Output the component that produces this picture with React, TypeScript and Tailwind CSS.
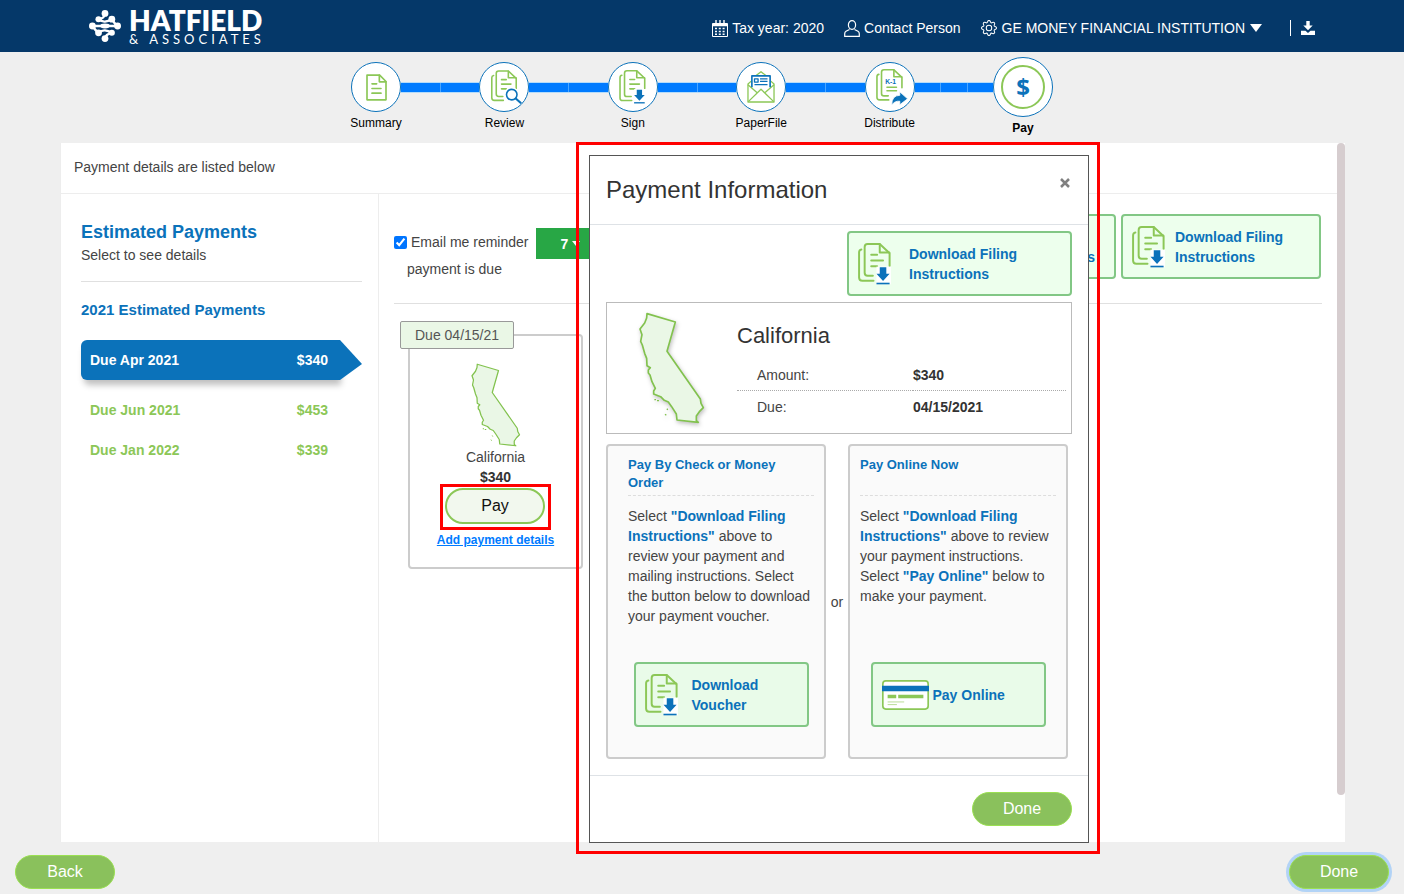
import type { ReactNode } from "react";
import clsx from "clsx";
import { BsGear } from "react-icons/bs";

const STEPS = [
    { label: "Summary", icon: <SummaryIcon /> },
    { label: "Review", icon: <ReviewIcon /> },
    { label: "Sign", icon: <DownloadDocIcon className="h-[34px] w-[27px]" /> },
    { label: "PaperFile", icon: <EnvelopeIcon /> },
    { label: "Distribute", icon: <DistributeIcon /> },
];

const PAYMENTS = [
    { due: "Due Apr 2021", amount: "$340", active: true },
    { due: "Due Jun 2021", amount: "$453", active: false },
    { due: "Due Jan 2022", amount: "$339", active: false },
];

function LogoMark() {
    return (
        <svg viewBox="0 0 94 94" className="h-8 w-8" fill="#fff">
            <circle cx="47" cy="10" r="10" />
            <circle cx="28" cy="27" r="9" />
            <circle cx="67" cy="27" r="10" />
            <circle cx="10" cy="47" r="10" />
            <ellipse cx="47" cy="47" rx="14" ry="7" />
            <circle cx="84" cy="47" r="10" />
            <circle cx="28" cy="67" r="10" />
            <circle cx="67" cy="67" r="9" />
            <circle cx="47" cy="84" r="10" />
            <g stroke="#fff" strokeWidth="7" fill="none">
                <path d="M47 12q-2 12-18 15M28 27q10 8 19 7t20-7q8 14 17 20M10 47h74M10 47q8 12 18 20 10-8 19-7t20 7M67 67q-18 4-20 16" />
            </g>
        </svg>
    );
}

function CalendarIcon() {
    return (
        <svg viewBox="0 0 16 17" className="h-[17px] w-4" fill="none" stroke="#fff">
            <path d="M.5 3.5h15v13H.5z" />
            <path d="M.5 4.5h15M.5 5.5h15M4 0v5M8 0v5M12 0v5" strokeWidth="1.4" />
            <path d="M3 8.5h10M3 11.5h10M3 14.2h10" strokeWidth="1.6" strokeDasharray="2 1.8" />
        </svg>
    );
}

function PersonIcon() {
    return (
        <svg viewBox="0 0 16 17" className="h-[17px] w-4" fill="none" stroke="#fff" strokeWidth="1.2">
            <ellipse cx="8" cy="5" rx="3.6" ry="4.3" />
            <path d="M5.5 9.5 2 11.3q-1.3.8-1.3 2.5v2.500h14.600v-2.500q0-1.700-1.300-2.500l-3.500-1.800" />
        </svg>
    );
}

function TrayIcon() {
    return (
        <svg viewBox="0 0 14 14" className="h-3.5 w-3.5" fill="#fff">
            <path d="M5.3 0h3.4v4.5h3L7 9.3 2.3 4.5h3z" />
            <path d="M0 9.8h4.5L7 12l2.5-2.2H14V14H0z" />
        </svg>
    );
}

// Two stacked sheets, shared by most of the step and button icons
function Sheets({ children }: { children?: ReactNode }) {
    return (
        <>
            <g fill="none" stroke="#8cc757" strokeWidth="6" strokeLinecap="round">
                <path d="M10 20q-7 1-7 9v76q0 10 10 10h34" />
                <path d="M96 70V31L66 3H29q-9 0-9 9v79q0 9 9 9h16" />
                <path d="M66 4v25h29" strokeLinejoin="round" />
            </g>
            {children}
        </>
    );
}

function SheetLines() {
    return <path d="M40 36h18M40 53h36M40 71h18" stroke="#8cc757" strokeWidth="6" strokeLinecap="round" />;
}

function DownloadDocIcon({ className }: { className?: string }) {
    return (
        <svg viewBox="0 0 100 128" className={clsx("shrink-0", className)}>
            <Sheets>
                <SheetLines />
                <path d="M56 72h44v54H56z" fill="#fff" />
                <path d="M66 74h20v20h10L76 116 56 94h10z" fill="#0b72ba" />
                <path d="M56 121h40v5H56z" fill="#0b72ba" />
            </Sheets>
        </svg>
    );
}

function SummaryIcon() {
    return (
        <svg viewBox="0 0 63 80" className="h-[27px] w-[21px]" fill="none" stroke="#8cc757" strokeWidth="5" strokeLinejoin="round">
            <path d="M3 3h38l19 19v55H3z" />
            <path d="M40 3v20h20M18 29h14M18 43h27M18 57h27" strokeLinecap="round" />
        </svg>
    );
}

function ReviewIcon() {
    return (
        <svg viewBox="0 0 118 128" className="ml-1 h-[34px] w-[31px]">
            <Sheets>
                <SheetLines />
                <circle cx="79" cy="93" r="28" fill="#fff" />
                <circle cx="79" cy="93" r="20" fill="#fff" stroke="#0b72ba" strokeWidth="6" />
                <path d="m93 107 22 19" stroke="#0b72ba" strokeWidth="8" />
            </Sheets>
        </svg>
    );
}

function DistributeIcon() {
    return (
        <svg viewBox="0 0 118 134" className="ml-1 h-9 w-8">
            <Sheets>
                <text x="34" y="57" fontSize="25" fontWeight="700" fill="#0b72ba" fontFamily="Liberation Sans, Arial, sans-serif">
                    K-1
                </text>
                <path d="M40 68h36M40 81h36" stroke="#8cc757" strokeWidth="5" strokeLinecap="round" />
                <path d="M58 134q0-36 30-36V85l29 26-29 22v-13q-19-2-30 14z" fill="#0b72ba" stroke="#fff" strokeWidth="3" />
            </Sheets>
        </svg>
    );
}

function EnvelopeIcon() {
    return (
        <svg viewBox="0 0 86 98" className="h-8 w-7" fill="none" stroke="#8cc757" strokeWidth="4" strokeLinejoin="round">
            <path d="M28 14 43 2l15 12M13 31 3 40v55h80V40l-10-9" />
            <path d="m3 42 30 26M83 42 53 68M4 94l39-38 39 38" />
            <path d="M15 50V15h56v35" stroke="#0b72ba" strokeWidth="5" />
            <path d="M23 24h11v10H23zM40 24h23M40 32h23M23 42h40" stroke="#0b72ba" strokeWidth="4" />
        </svg>
    );
}

function CardIcon() {
    return (
        <svg viewBox="0 0 142 90" className="h-[30px] w-[47px] shrink-0">
            <rect x="2.5" y="2.5" width="137" height="85" rx="9" fill="#fff" stroke="#8cc757" strokeWidth="5" />
            <path d="M0 17h142v17H0z" fill="#0b72ba" />
            <path d="M17 44h26v11H17zM49 44h76v11H49z" fill="#8cc757" />
            <path d="M17 66h50M17 74h28" stroke="#b9dd97" strokeWidth="3" />
        </svg>
    );
}

function California({ className }: { className?: string }) {
    return (
        <svg viewBox="148 66 198 336" className={className}>
            <path
                d="m172 71 85 25-25 88 100 143 2 13 7 13-12 12-9 13v14l6 5-64-7-2-18-14-22-10-14-12-5-11-11-21-8v-9l5-8-10-20-6-20-5-6v-9l6-7-10-6-1-22-6-15-7-25-5-11 4-20-6-17 14-18 6-15z"
                fill="#eaf7e6"
                stroke="#82c24e"
                strokeWidth="5"
                strokeLinejoin="round"
            />
            <path d="M194 329h5M202 332h6M232 356l2 4M226 373l4 3" stroke="#82c24e" strokeWidth="4" fill="none" />
        </svg>
    );
}

function StepCircle({ children, large }: { children: ReactNode; large?: boolean }) {
    return (
        <div
            className={clsx(
                "flex shrink-0 items-center justify-center rounded-full border border-[#0b72ba] bg-white",
                large ? "h-[60px] w-[60px]" : "h-[50px] w-[50px]"
            )}
        >
            {children}
        </div>
    );
}

function StepLine({ parts }: { parts: number }) {
    return (
        <div className="mt-[25px] flex h-[11px] flex-1 border-y border-[#b5dcfa] bg-[#007bff]">
            {Array.from({ length: parts }, (_, i) => (
                <span key={i} className={clsx("flex-1", i > 0 && "border-l border-[#4ba6ff]")} />
            ))}
        </div>
    );
}

function Stepper() {
    return (
        <nav className="flex h-[91px] justify-center pt-[5px]">
            <ol className="flex w-[702px] text-xs leading-[18px] text-black">
                {STEPS.map((step, i) => (
                    <li key={step.label} className="flex flex-1">
                        <div className="mt-[5px] flex w-[50px] flex-col items-center gap-[2px]">
                            <StepCircle>{step.icon}</StepCircle>
                            <span className="whitespace-nowrap">{step.label}</span>
                        </div>
                        <StepLine parts={i === STEPS.length - 1 ? 3 : 2} />
                    </li>
                ))}
                <li className="flex w-[60px] flex-col items-center gap-[2px] font-bold">
                    <StepCircle large>
                        <div className="flex h-11 w-11 items-center justify-center rounded-full border-2 border-[#8cc757] font-['Open_Sans',sans-serif] text-2xl text-[#0b72ba]">
                            $
                        </div>
                    </StepCircle>
                    <span>Pay</span>
                </li>
            </ol>
        </nav>
    );
}

function Header() {
    return (
        <header className="flex h-[52px] items-center justify-between bg-[#053869] px-[89px] text-sm text-white">
            <a href="#home" className="flex items-center gap-2 font-['Lato',sans-serif]">
                <LogoMark />
                <span className="flex flex-col">
                    <span className="text-[28px] leading-[26px] font-extrabold">HATFIELD</span>
                    <span className="text-[13px] leading-3 tracking-[4px]">&amp; ASSOCIATES</span>
                </span>
            </a>
            <div className="flex items-center gap-5 pt-1">
                <span className="flex items-center gap-1">
                    <CalendarIcon />
                    Tax year: 2020
                </span>
                <a href="#contact" className="flex items-center gap-1">
                    <PersonIcon />
                    Contact Person
                </a>
                <button className="flex items-center gap-[5px]">
                    <BsGear className="h-4 w-4" />
                    GE MONEY FINANCIAL INSTITUTION
                    <svg viewBox="0 0 12 8" className="h-2 w-3" fill="#fff">
                        <path d="M0 0h12L6 8z" />
                    </svg>
                </button>
                <button aria-label="Download" className="ml-2 flex h-4 items-center border-l border-white pl-2.5">
                    <TrayIcon />
                </button>
            </div>
        </header>
    );
}

function PillButton({ children, focused }: { children: ReactNode; focused?: boolean }) {
    return (
        <button
            className={clsx(
                "h-[34px] w-[100px] rounded-full border border-[#9be052] bg-[#8ac15c] text-base text-white",
                focused && "ring-3 ring-[#b2d3f6]"
            )}
        >
            {children}
        </button>
    );
}

function DownloadButton({ children, className }: { children: ReactNode; className?: string }) {
    return (
        <button
            className={clsx(
                "flex h-[65px] items-center rounded border-2 border-[#82c785] pl-[9px] text-left text-sm leading-5 font-bold text-[#0b72ba]",
                className
            )}
        >
            {children}
        </button>
    );
}

function Sidebar() {
    return (
        <aside className="w-[318px] shrink-0 border-r border-[#ededed] pt-[25px] pr-4 pl-5">
            <h2 className="text-lg leading-[26px] font-bold text-[#0b72ba]">Estimated Payments</h2>
            <p className="border-b border-[#e0e0e0] pb-4 leading-5">Select to see details</p>
            <h3 className="mt-[18px] text-[15px] leading-5 font-bold text-[#0b72ba]">2021 Estimated Payments</h3>
            <ul className="mt-5 font-bold">
                {PAYMENTS.map((payment) => (
                    <li key={payment.due} className={clsx("flex h-10", payment.active && "mb-[10px]")}>
                        <button
                            className={clsx(
                                "flex flex-1 items-center justify-between rounded-l-md pr-3 pl-[9px]",
                                payment.active
                                    ? "bg-[#0b72ba] text-white shadow-[2px_6px_6px_-1px_rgba(0,0,0,0.25)]"
                                    : "text-[#8cc757]"
                            )}
                        >
                            <span>{payment.due}</span>
                            <span>{payment.amount}</span>
                        </button>
                        <span
                            className={clsx(
                                "w-[22px] [clip-path:polygon(0_0,100%_60%,0_100%)]",
                                payment.active && "bg-[#0b72ba]"
                            )}
                        />
                    </li>
                ))}
            </ul>
        </aside>
    );
}

function PaymentCard() {
    return (
        <article className="relative mt-[30px] ml-[14px] flex w-[175px] flex-col items-center rounded border-2 border-[#ccc] pt-[27px] pb-[17px]">
            <span className="absolute -top-[15px] -left-[10px] rounded-xs border border-[#999] bg-[#eaf7e6] px-[14px] py-[3px] leading-5 text-[#555]">
                Due 04/15/21
            </span>
            <California className="h-[84px] w-[50px]" />
            <span className="leading-5">California</span>
            <b className="leading-5 text-[#333]">$340</b>
            <div className="-mt-[3px] flex h-[46px] w-[111px] border-3 border-[#f00] p-px pl-[2px]">
                <button className="h-9 w-[100px] rounded-full border-2 border-[#8cc757] bg-[#f2f8ee] text-base text-[#111]">
                    Pay
                </button>
            </div>
            <a href="#details" className="text-xs leading-5 font-bold text-[#007bff] underline">
                Add payment details
            </a>
        </article>
    );
}

function PaymentsPanel() {
    return (
        <section className="min-w-0 flex-1 px-[15px] pt-5">
            <div className="flex items-start justify-between border-b border-[#e0e0e0] pr-px pb-6">
                <div className="pt-[14px]">
                    <div className="flex items-start gap-2">
                        <label className="flex items-center gap-1 leading-7">
                            <input type="checkbox" defaultChecked className="h-[13px] w-[13px] accent-[#0075ff]" />
                            Email me reminder
                        </label>
                        <div className="relative">
                            <select
                                aria-label="Days before payment"
                                className="h-[31px] w-[70px] appearance-none bg-[#28a745] pl-6 font-bold text-white"
                            >
                                <option>7</option>
                                <option>14</option>
                            </select>
                            <svg viewBox="0 0 8 5" className="absolute top-[13px] left-9 h-[5px] w-2" fill="#fff">
                                <path d="M0 0h8L4 5z" />
                            </svg>
                        </div>
                    </div>
                    <p className="pl-[13px] leading-5">payment is due</p>
                </div>
                <div className="flex gap-[5px]">
                    <DownloadButton className="w-[200px] gap-[10px] bg-[#edffed]">
                        <DownloadDocIcon className="h-[42px] w-[33px]" />
                        <span>
                            Download
                            <br />
                            Payment Vouchers
                        </span>
                    </DownloadButton>
                    <DownloadButton className="w-[200px] gap-[10px] bg-[#edffed]">
                        <DownloadDocIcon className="h-[42px] w-[33px]" />
                        <span>
                            Download Filing
                            <br />
                            Instructions
                        </span>
                    </DownloadButton>
                </div>
            </div>
            <PaymentCard />
        </section>
    );
}

function Strong({ children }: { children: ReactNode }) {
    return <b className="text-[#0b72ba]">{children}</b>;
}

function PaymentOption({ title, text, children, className }: { title: string; text: ReactNode; children: ReactNode; className?: string }) {
    return (
        <section className={clsx("flex h-[315px] flex-col rounded border-2 border-[#ccc] bg-[#fafafa] pt-[10px] pr-[10px] pb-[30px]", className)}>
            <h4 className="min-h-10 border-b border-dashed border-[#ddd] pr-2 text-[13px] leading-[18px] font-bold text-[#0b72ba]">
                {title}
            </h4>
            <p className="mt-[10px] leading-5">{text}</p>
            <div className="mt-auto flex justify-center">{children}</div>
        </section>
    );
}

function PaymentDialog() {
    return (
        <div className="absolute top-[142px] left-[576px] w-[524px] border-3 border-[#f00] pt-[10px] pr-2 pb-2 pl-[10px]">
            <div role="dialog" aria-labelledby="dialog-title" className="border border-[#555] bg-white">
                <div className="flex h-[69px] items-start justify-between border-b border-[#dee2e6] px-4 pt-4">
                    <h2 id="dialog-title" className="text-2xl leading-9 text-[#333]">
                        Payment Information
                    </h2>
                    <button aria-label="Close" className="flex h-[22px] w-[14px] items-center justify-center">
                        <svg viewBox="0 0 10 10" className="h-[10px] w-[10px]" stroke="#808080" strokeWidth="2.5">
                            <path d="m1 1 8 8M9 1 1 9" />
                        </svg>
                    </button>
                </div>
                <div className="px-4 pt-[6px] pb-4">
                    <DownloadButton className="ml-auto w-[225px] gap-[18px] bg-[#edffed]">
                        <DownloadDocIcon className="h-[42px] w-[33px]" />
                        <span>
                            Download Filing
                            <br />
                            Instructions
                        </span>
                    </DownloadButton>
                    <div className="mt-[6px] flex h-[132px] border border-[#bbb] pr-[5px]">
                        <div className="w-[130px] shrink-0 pt-[9px] pl-8">
                            <California className="h-28 w-[66px] drop-shadow-[1px_2px_2px_rgba(0,0,0,0.25)]" />
                        </div>
                        <div className="flex-1 pt-[17px]">
                            <h3 className="text-[22px] leading-8 text-[#333]">California</h3>
                            <table className="mt-[6px] w-full text-left">
                                <tbody>
                                    <tr className="border-b border-dotted border-[#aaa]">
                                        <th scope="row" className="h-8 w-[176px] pt-0.5 pl-5 font-normal">Amount:</th>
                                        <td className="pt-0.5 font-bold text-[#333]">$340</td>
                                    </tr>
                                    <tr>
                                        <th scope="row" className="h-8 pt-0.5 pl-5 font-normal">Due:</th>
                                        <td className="pt-0.5 font-bold text-[#333]">04/15/2021</td>
                                    </tr>
                                </tbody>
                            </table>
                        </div>
                    </div>
                    <div className="mt-[10px] mr-1 grid grid-cols-[1fr_22px_1fr] items-center">
                        <PaymentOption
                            title="Pay By Check or Money Order"
                            className="pl-5"
                            text={
                                <>
                                    Select <Strong>"Download Filing Instructions"</Strong> above to review your payment and mailing
                                    instructions. Select the button below to download your payment voucher.
                                </>
                            }
                        >
                            <DownloadButton className="w-[175px] gap-[14px] bg-[#e9fbe9]">
                                <DownloadDocIcon className="h-[42px] w-[33px]" />
                                <span>
                                    Download
                                    <br />
                                    Voucher
                                </span>
                            </DownloadButton>
                        </PaymentOption>
                        <span className="text-center">or</span>
                        <PaymentOption
                            title="Pay Online Now"
                            className="pl-[10px]"
                            text={
                                <>
                                    Select <Strong>"Download Filing Instructions"</Strong> above to review your payment instructions.
                                    Select <Strong>"Pay Online"</Strong> below to make your payment.
                                </>
                            }
                        >
                            <DownloadButton className="w-[175px] gap-1 bg-[#e9fbe9]">
                                <CardIcon />
                                Pay Online
                            </DownloadButton>
                        </PaymentOption>
                    </div>
                </div>
                <div className="flex justify-end border-t border-[#dee2e6] p-4">
                    <PillButton>Done</PillButton>
                </div>
            </div>
        </div>
    );
}

export default function App() {
    return (
        <div className="relative flex min-h-screen flex-col bg-[#efefef] font-['Liberation_Sans',Arial,sans-serif] text-sm text-[#444]">
            <Header />
            <Stepper />
            <main className="mr-[59px] ml-[60px] flex flex-1 bg-white">
                <div className="flex min-w-0 flex-1 flex-col border-l border-[#ededed]">
                    <p className="h-[51px] border-b border-[#ededed] pt-[14px] pl-[13px] leading-5">
                        Payment details are listed below
                    </p>
                    <div className="flex flex-1">
                        <Sidebar />
                        <PaymentsPanel />
                    </div>
                </div>
                <div className="h-[652px] w-2 rounded-full bg-[#d6cdcf]" />
            </main>
            <footer className="flex justify-between px-[15px] pt-[13px] pb-[5px]">
                <PillButton>Back</PillButton>
                <PillButton focused>Done</PillButton>
            </footer>
            <PaymentDialog />
        </div>
    );
}
